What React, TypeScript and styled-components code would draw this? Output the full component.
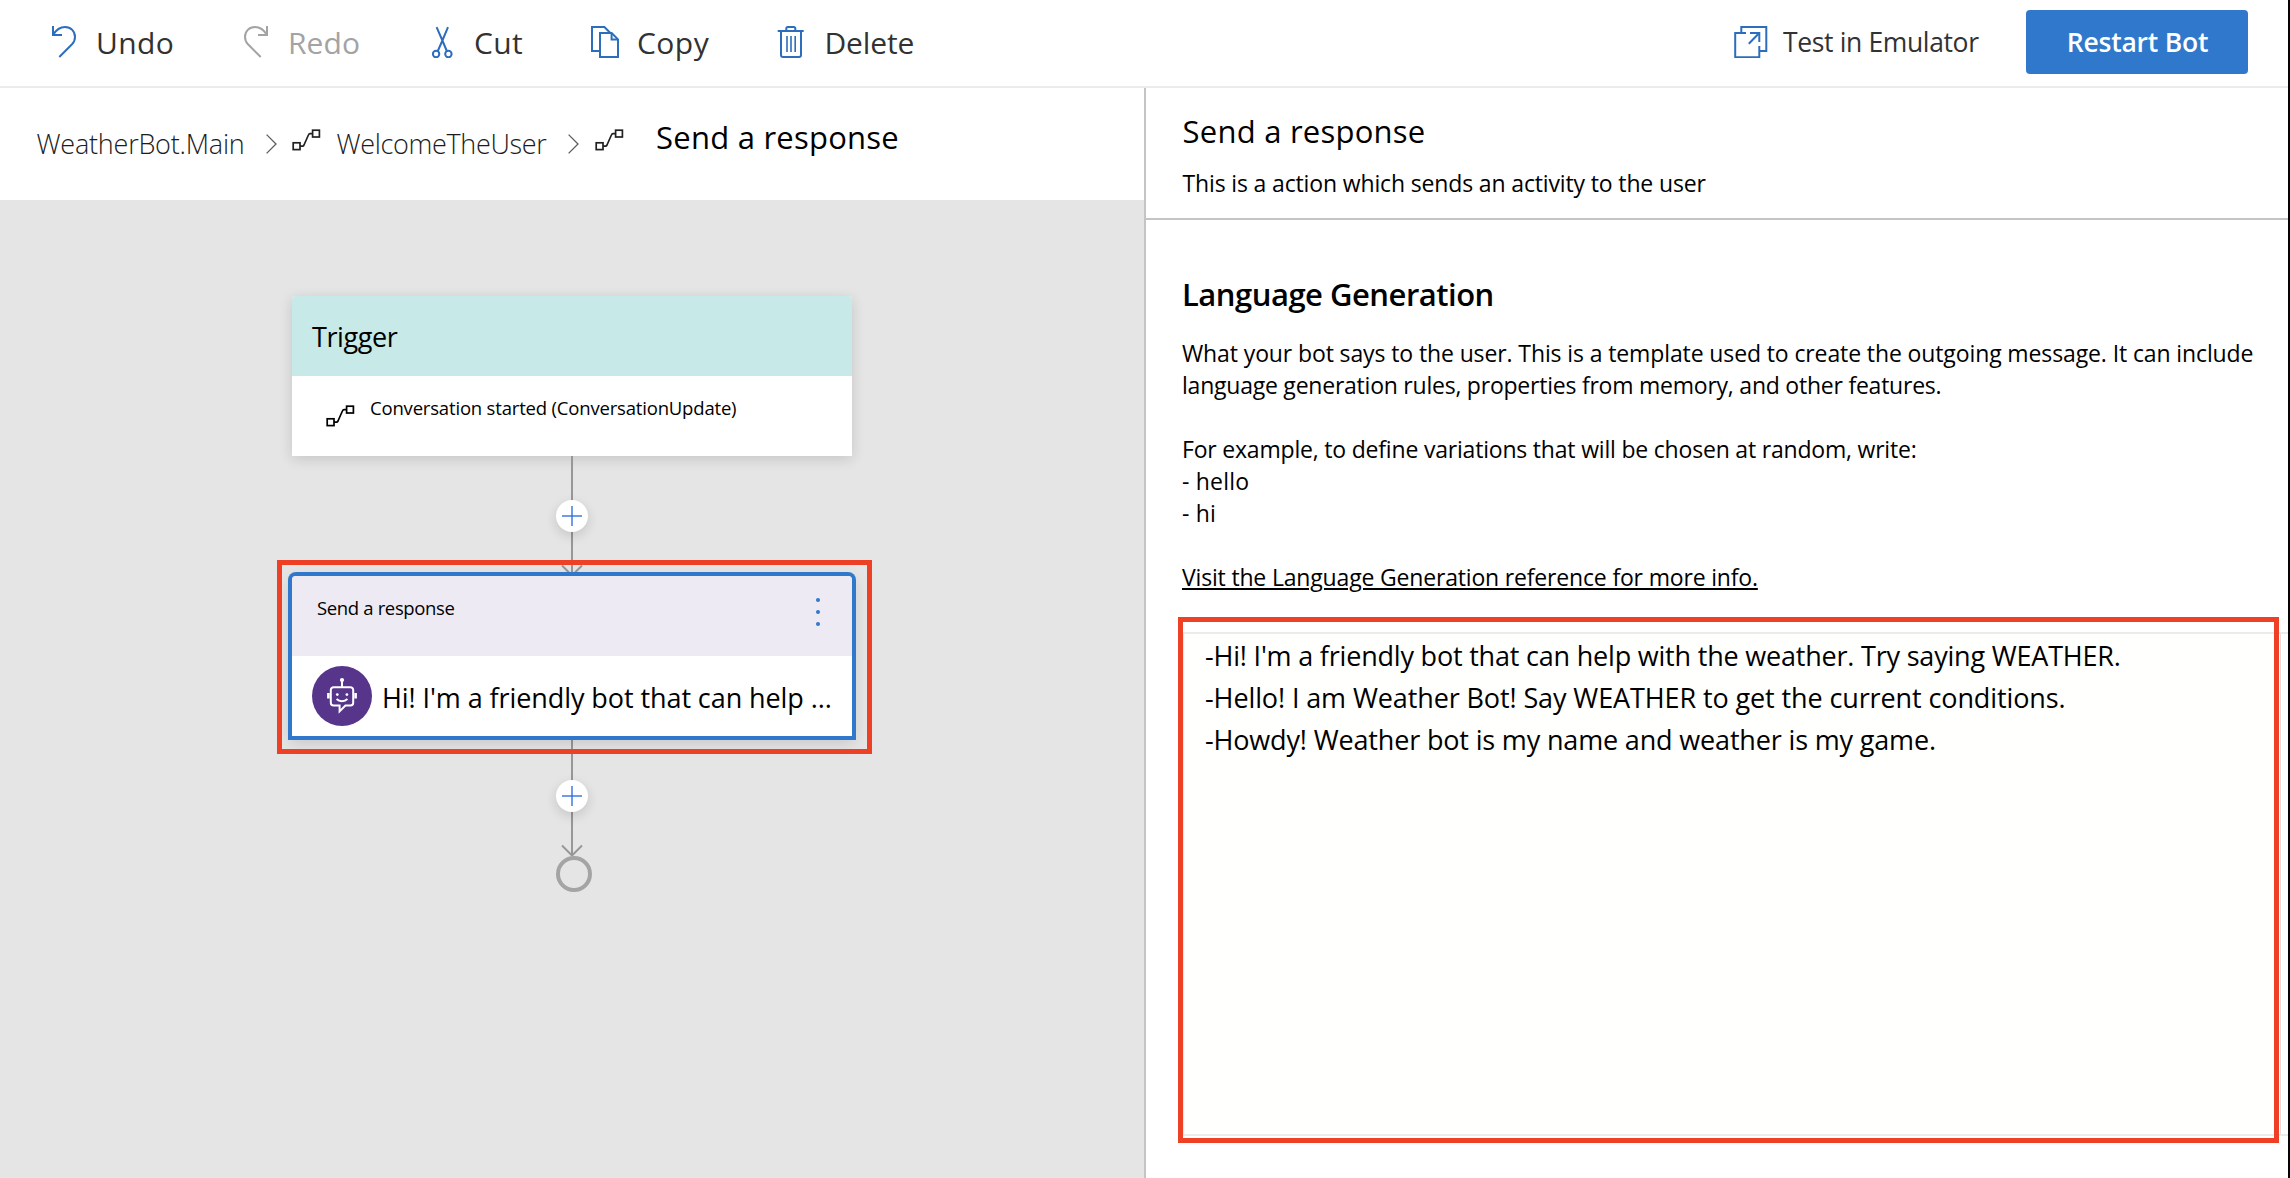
import React from "react";
import styled, { createGlobalStyle, css } from "styled-components";

const GlobalStyle = createGlobalStyle`
  *, *::before, *::after { box-sizing: border-box; }
  html, body { margin: 0; padding: 0; background: #fff; }
  body {
    font-family: "Open Sans", "Noto Sans", sans-serif;
    color: #000;
    overflow: hidden;
  }
`;

const colors = {
  accent: "#2f78cb",
  icon: "#2c6ebd",
  muted: "#a3a3a3",
  text: "#323232",
  line: "#c4c4c4",
  faint: "#ebebeb",
  canvas: "#e5e5e5",
  connector: "#979797",
  highlight: "#ed4025",
};

/* ---------- text ---------- */

const Text = styled.span<{ $track?: number }>`
  white-space: pre;
  letter-spacing: ${(p) => p.$track ?? 0}px;
`;

/* ---------- shell ---------- */

const Window = styled.div`
  width: 2290px;
  height: 1178px;
  display: flex;
  flex-direction: column;
  background: #fff;
  border-right: 2px solid #040407;
`;

const Toolbar = styled.header`
  flex: none;
  height: 88px;
  padding: 0 40px 2px 48px;
  border-bottom: 2px solid ${colors.faint};
  display: flex;
  align-items: center;
`;

const Commands = styled.div`
  display: grid;
  grid-template-columns: 192px 186px 163px 186px auto;
  align-items: center;
`;

const Command = styled.div<{ $disabled?: boolean; $iconGap?: number }>`
  display: flex;
  align-items: center;
  gap: ${(p) => p.$iconGap ?? 16}px;
  font-size: 30px;
  line-height: 42px;
  color: ${(p) => (p.$disabled ? colors.muted : colors.text)};
  svg {
    flex: none;
    color: ${(p) => (p.$disabled ? colors.muted : colors.icon)};
  }
`;

const CommandLabel = styled(Text)`
  padding-top: 2px;
`;

const EmulatorLink = styled.div`
  margin-left: auto;
  width: 292px;
  display: flex;
  align-items: center;
  gap: 15px;
  font-size: 26.5px;
  line-height: 36px;
  color: ${colors.text};
  svg {
    flex: none;
    color: ${colors.icon};
  }
`;

const PrimaryButton = styled.button`
  width: 222px;
  height: 64px;
  padding: 0 0 0 1px;
  border: 0;
  border-radius: 4px;
  background: ${colors.accent};
  color: #fff;
  font-family: inherit;
  font-size: 26.5px;
  font-weight: 600;
`;

const Workspace = styled.main`
  flex: 1;
  min-height: 0;
  display: flex;
`;

const FlowPane = styled.section`
  width: 1144px;
  display: flex;
  flex-direction: column;
`;

/* ---------- breadcrumbs ---------- */

const Breadcrumbs = styled.nav`
  flex: none;
  height: 112px;
  padding: 0 0 1px 36.5px;
  display: grid;
  grid-template-columns: 229.5px 26px 44.5px 231.5px 27px 61px auto;
  align-items: center;
`;

const Crumb = styled.a`
  font-size: 27px;
  font-weight: 300;
  line-height: 36px;
  color: #1c1c1c;
`;

const CrumbIcon = styled.span`
  display: flex;
  padding-bottom: 7px;
  color: #222;
`;

const CrumbSeparator = styled.span`
  display: flex;
  color: #5c5c5c;
`;

const CrumbTitle = styled.span`
  font-size: 31px;
  line-height: 42px;
  padding-bottom: 14px;
`;

/* ---------- flow canvas ---------- */

const Canvas = styled.div`
  flex: 1;
  padding-top: 96px;
  background: ${colors.canvas};
  display: flex;
  flex-direction: column;
  align-items: center;
`;

const Card = styled.article<{ $selected?: boolean }>`
  position: relative;
  z-index: ${(p) => (p.$selected ? 1 : 0)};
  flex: none;
  width: 560px;
  height: 160px;
  border-radius: 4px 4px 0 0;
  background: #fff;
  ${(p) =>
    p.$selected
      ? css`
          box-shadow: 0 0 0 4px ${colors.accent}, 0 5px 16px 2px rgba(0, 0, 0, 0.14);
        `
      : css`
          box-shadow: 0 3px 14px rgba(0, 0, 0, 0.14);
        `}
`;

const CardHeader = styled.div<{ $tone: "trigger" | "action" }>`
  height: 80px;
  border-radius: 4px 4px 0 0;
  display: flex;
  align-items: center;
  justify-content: space-between;
  ${(p) =>
    p.$tone === "trigger"
      ? css`
          padding: 0 20px;
          background: #c7e9e7;
          font-size: 27px;
        `
      : css`
          padding: 0 32px 0 25px;
          background: #edeaf4;
          font-size: 18.5px;
        `}
`;

const RaisedLabel = styled.span`
  padding-bottom: 17px;
  font-size: 18.5px;
  line-height: 26px;
`;

const TriggerBody = styled.div`
  height: 80px;
  padding-left: 34px;
  display: flex;
  align-items: center;
  gap: 15px;
`;

const ActionBody = styled.div`
  height: 80px;
  padding: 0 20px;
  display: flex;
  align-items: center;
  gap: 10px;
  font-size: 27px;
  line-height: 36px;
`;

const ActionText = styled.span`
  padding-top: 4px;
`;

const ConnectorBox = styled.div`
  position: relative;
  flex: none;
  width: 32px;
  height: 120px;
`;

const AddButton = styled.div`
  position: absolute;
  top: 44px;
  left: 0;
  width: 32px;
  height: 32px;
  border-radius: 50%;
  background: #fff;
  box-shadow: 0 4px 12px rgba(0, 0, 0, 0.14);
  display: flex;
  align-items: center;
  justify-content: center;
`;

const EndNode = styled.div`
  flex: none;
  width: 36px;
  height: 36px;
  margin-left: 4px;
  border: 4px solid #a4a4a4;
  border-radius: 50%;
`;

const Highlight = styled.div<{ $inset: string }>`
  position: absolute;
  inset: ${(p) => p.$inset};
  border: 5px solid ${colors.highlight};
  pointer-events: none;
`;

/* ---------- property pane ---------- */

const PropertyPane = styled.aside`
  flex: 1;
  border-left: 2px solid ${colors.line};
  display: flex;
  flex-direction: column;
`;

const PaneHeader = styled.div`
  flex: none;
  height: 132px;
  padding: 22px 0 0 36.5px;
  border-bottom: 2px solid ${colors.line};
  display: flex;
  flex-direction: column;
  gap: 15px;
`;

const PaneTitle = styled.h1`
  margin: 0;
  font-size: 31px;
  font-weight: 400;
  line-height: 42px;
`;

const PaneSubtitle = styled.div`
  font-size: 23px;
  line-height: 32px;
`;

const PaneBody = styled.div`
  padding: 53px 0 0 36px;
`;

const SectionTitle = styled.h2`
  margin: 0 0 22px;
  font-size: 31px;
  font-weight: 600;
  line-height: 42px;
`;

const Description = styled.div`
  margin-bottom: 39px;
  display: flex;
  flex-direction: column;
  align-items: flex-start;
  font-size: 23px;
  line-height: 32px;
`;

const Line = styled(Text)`
  min-height: 32px;
`;

const DocLink = styled(Line)`
  text-decoration: underline;
  text-decoration-thickness: 2px;
  text-underline-offset: 2px;
`;

const Editor = styled.div`
  position: relative;
  height: 504px;
  border: 2px solid ${colors.faint};
  border-right: 0;
  display: flex;
`;

const EditorContent = styled.div`
  width: 1097px;
  padding: 1px 0 0 21px;
  border-right: 1px solid #dedede;
  background: #fffffd;
  display: flex;
  flex-direction: column;
  align-items: flex-start;
  font-size: 27px;
  line-height: 42px;
`;

/* ---------- icons ---------- */

type IconProps = { w?: number; h?: number; sw?: number; children: React.ReactNode };

const Icon = ({ w = 32, h = 32, sw = 2, children }: IconProps) => (
  <svg width={w} height={h} viewBox={`0 0 ${w} ${h}`} fill="none" stroke="currentColor" strokeWidth={sw}>
    {children}
  </svg>
);

const UndoIcon = () => (
  <Icon>
    <path d="M5 0V9H14" />
    <path d="M5 9C8 4 12 1 17 1C23 1 27 5.3 27 11C27 14 26 16.2 24 18.3L11.3 31" />
  </Icon>
);

const RedoIcon = () => (
  <Icon>
    <path d="M27 0V9H18" />
    <path d="M27 9C24 4 20 1 15 1C9 1 5 5.3 5 11C5 14 6 16.2 8 18.3L20.7 31" />
  </Icon>
);

const CutIcon = () => (
  <Icon>
    <path d="M10.6 1.2L16.4 14.5L20.8 25M22 1.2L16.4 14.5L11.8 25" />
    <circle cx="10.1" cy="28" r="3.2" />
    <circle cx="22.4" cy="28" r="3.2" />
  </Icon>
);

const CopyIcon = () => (
  <Icon>
    <path d="M11 25H3V1H15.4L21.4 7" />
    <path d="M11 7H22.6L29 13.4V31H11Z" />
    <path d="M22.6 7V13.4H29" />
  </Icon>
);

const DeleteIcon = () => (
  <Icon>
    <path d="M2.7 5H28.7" />
    <path d="M11.3 5V2.5A1.5 1.5 0 0 1 12.8 1H18.8A1.5 1.5 0 0 1 20.3 2.5V5" />
    <path d="M6 5V29A2 2 0 0 0 8 31H24A2 2 0 0 0 26 29V5" />
    <path d="M12 10V26M16 10V26M20.2 10V26" strokeWidth="1.6" />
  </Icon>
);

const EmulatorIcon = () => (
  <Icon w={34}>
    <path d="M12 7H1.2V31.2H25.3V20" />
    <path d="M7.3 7V1H32.3V25H26" />
    <path d="M16 7H25.3V16" />
    <path d="M14.8 17.8L25 7.3" />
  </Icon>
);

const FlowIcon = () => (
  <Icon w={29} h={22} sw={1.7}>
    <rect x="1.2" y="13.8" width="6.8" height="6.8" />
    <rect x="20.6" y="1.2" width="6.8" height="6.8" />
    <path d="M8 17.2H10.6C11.4 17.2 11.7 16.6 12 16L16.4 6C16.8 5 17.2 4.6 18 4.6H20.6" />
  </Icon>
);

const ChevronIcon = () => (
  <Icon w={12} h={20} sw={1.3}>
    <path d="M0.6 0.6L10 10L0.6 19.4" />
  </Icon>
);

const MoreIcon = () => (
  <svg width="4" height="36" viewBox="0 0 4 36" fill={colors.accent}>
    <circle cx="2" cy="2" r="2" />
    <circle cx="2" cy="14" r="2" />
    <circle cx="2" cy="26" r="2" />
  </svg>
);

const BotIcon = () => (
  <svg width="60" height="60" viewBox="0 0 60 60" fill="none" stroke="#fff" strokeWidth="2">
    <circle cx="30" cy="30" r="30" fill="#56358b" stroke="none" />
    <circle cx="30" cy="14" r="2.1" fill="#fff" stroke="none" />
    <path d="M30 15V21" />
    <path d="M27.6 39.6H21.6A2.8 2.8 0 0 1 18.8 36.8V24A2.8 2.8 0 0 1 21.6 21.2H38.4A2.8 2.8 0 0 1 41.2 24V36.8A2.8 2.8 0 0 1 38.4 39.6H33.4L27.6 45.4Z" />
    <path d="M16.4 27V32.4M43.6 27V32.4" strokeWidth="2.6" />
    <circle cx="25.3" cy="28.6" r="1.4" fill="#fff" stroke="none" />
    <circle cx="34.9" cy="28.6" r="1.4" fill="#fff" stroke="none" />
    <path d="M24.6 33C27.4 35.9 32.6 35.9 35.4 33" />
  </svg>
);

const Connector = () => (
  <ConnectorBox>
    <svg width="32" height="120" viewBox="0 0 32 120" fill="none" stroke={colors.connector} strokeWidth="2">
      <path d="M16 0V119.5" />
      <path d="M6 109.5L16 119.5L26 109.5" />
    </svg>
    <AddButton>
      <svg width="20" height="20" viewBox="0 0 20 20" stroke="#2b6be0" strokeOpacity="0.68" strokeWidth="2">
        <path d="M10 0V20" />
        <path d="M0 10H20" />
      </svg>
    </AddButton>
  </ConnectorBox>
);

/* ---------- content ---------- */

const description: { text: string; track: number }[] = [
  {
    text: "What your bot says to the user. This is a template used to create the outgoing message. It can include",
    track: -0.115,
  },
  { text: "language generation rules, properties from memory, and other features.", track: -0.23 },
  { text: "", track: 0 },
  { text: "For example, to define variations that will be chosen at random, write:", track: -0.195 },
  { text: "- hello", track: 0.2 },
  { text: "- hi", track: 0.2 },
  { text: "", track: 0 },
];

const responses: { text: string; track: number }[] = [
  { text: "-Hi! I'm a friendly bot that can help with the weather. Try saying WEATHER.", track: -0.2 },
  { text: "-Hello! I am Weather Bot! Say WEATHER to get the current conditions.", track: -0.11 },
  { text: "-Howdy! Weather bot is my name and weather is my game.", track: -0.16 },
];

export default function App() {
  return (
    <>
      <GlobalStyle />
      <Window>
        <Toolbar>
          <Commands>
            <Command>
              <UndoIcon />
              <CommandLabel $track={0.4}>Undo</CommandLabel>
            </Command>
            <Command $disabled>
              <RedoIcon />
              <CommandLabel $track={0.1}>Redo</CommandLabel>
            </Command>
            <Command>
              <CutIcon />
              <CommandLabel $track={0.35}>Cut</CommandLabel>
            </Command>
            <Command>
              <CopyIcon />
              <CommandLabel $track={0.45}>Copy</CommandLabel>
            </Command>
            <Command $iconGap={17.5}>
              <DeleteIcon />
              <CommandLabel $track={-0.15}>Delete</CommandLabel>
            </Command>
          </Commands>
          <EmulatorLink>
            <EmulatorIcon />
            <Text $track={-0.36}>Test in Emulator</Text>
          </EmulatorLink>
          <PrimaryButton>
            <Text $track={-0.2}>Restart Bot</Text>
          </PrimaryButton>
        </Toolbar>

        <Workspace>
          <FlowPane>
            <Breadcrumbs>
              <Crumb>
                <Text $track={-0.23}>WeatherBot.Main</Text>
              </Crumb>
              <CrumbSeparator>
                <ChevronIcon />
              </CrumbSeparator>
              <CrumbIcon>
                <FlowIcon />
              </CrumbIcon>
              <Crumb>
                <Text $track={-0.34}>WelcomeTheUser</Text>
              </Crumb>
              <CrumbSeparator>
                <ChevronIcon />
              </CrumbSeparator>
              <CrumbIcon>
                <FlowIcon />
              </CrumbIcon>
              <CrumbTitle>
                <Text $track={0.24}>Send a response</Text>
              </CrumbTitle>
            </Breadcrumbs>

            <Canvas>
              <Card>
                <CardHeader $tone="trigger">
                  <Text $track={-0.4}>Trigger</Text>
                </CardHeader>
                <TriggerBody>
                  <FlowIcon />
                  <RaisedLabel>
                    <Text $track={-0.18}>Conversation started (ConversationUpdate)</Text>
                  </RaisedLabel>
                </TriggerBody>
              </Card>
              <Connector />
              <Card $selected>
                <CardHeader $tone="action">
                  <RaisedLabel>
                    <Text $track={-0.35}>Send a response</Text>
                  </RaisedLabel>
                  <MoreIcon />
                </CardHeader>
                <ActionBody>
                  <BotIcon />
                  <ActionText>
                    <Text $track={-0.08}>Hi! I'm a friendly bot that can help ...</Text>
                  </ActionText>
                </ActionBody>
                <Highlight $inset="-16px -20px -18px -15px" />
              </Card>
              <Connector />
              <EndNode />
            </Canvas>
          </FlowPane>

          <PropertyPane>
            <PaneHeader>
              <PaneTitle>
                <Text $track={0.24}>Send a response</Text>
              </PaneTitle>
              <PaneSubtitle>
                <Text $track={-0.145}>This is a action which sends an activity to the user</Text>
              </PaneSubtitle>
            </PaneHeader>
            <PaneBody>
              <SectionTitle>
                <Text $track={-0.5}>Language Generation</Text>
              </SectionTitle>
              <Description>
                {description.map((line, i) => (
                  <Line key={i} $track={line.track}>
                    {line.text}
                  </Line>
                ))}
                <DocLink $track={-0.174}>Visit the Language Generation reference for more info.</DocLink>
              </Description>
              <Editor>
                <EditorContent>
                  {responses.map((line) => (
                    <Text key={line.text} $track={line.track}>
                      {line.text}
                    </Text>
                  ))}
                </EditorContent>
                <Highlight $inset="-17px 9px -9px -6px" />
              </Editor>
            </PaneBody>
          </PropertyPane>
        </Workspace>
      </Window>
    </>
  );
}
